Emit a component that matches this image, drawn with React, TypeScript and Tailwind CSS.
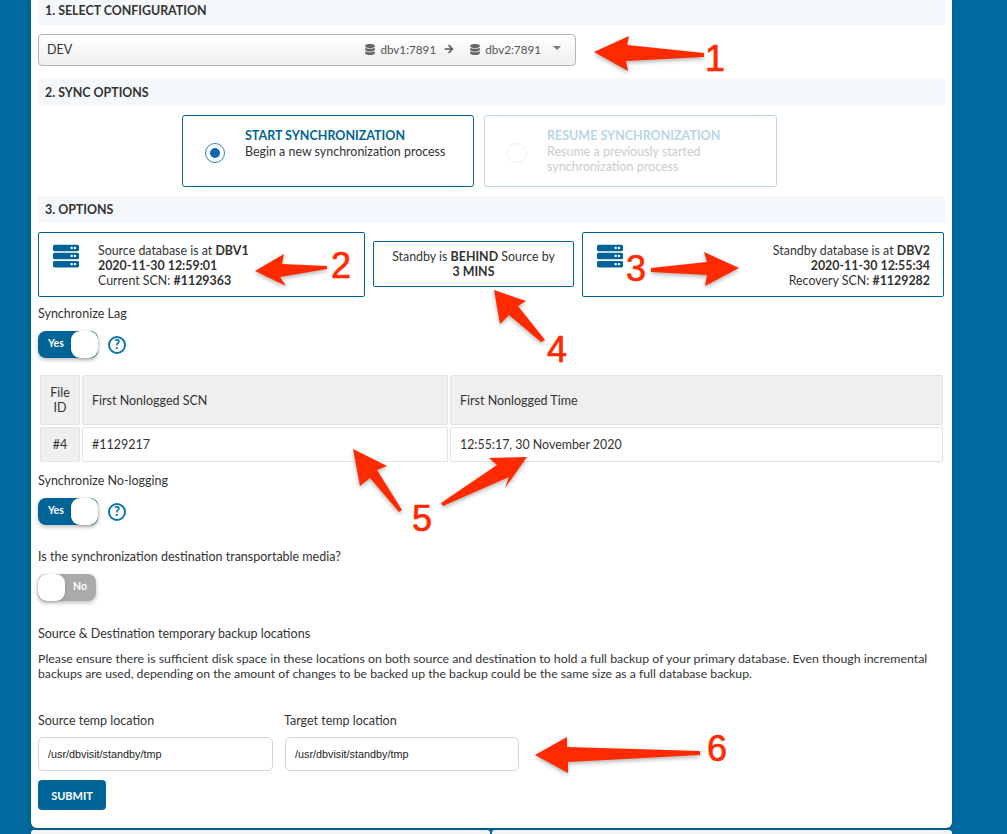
import { FaServer, FaDatabase, FaArrowRight } from "react-icons/fa";

function SectionHeader({ title, className }: { title: string; className: string }) {
  return (
    <div className={`bg-[#f5f8fa] px-[7px] text-[12.4px] font-bold text-[#333] ${className}`}>
      {title}
    </div>
  );
}

function Toggle({ on }: { on: boolean }) {
  if (on) {
    return (
      <div className="relative h-[27px] w-[60px] rounded-[8px] bg-[#006596] shadow-[0_2px_4px_rgba(0,0,0,0.25)]">
        <span className="absolute left-[10px] top-[5px] text-[10.5px] font-bold text-white">Yes</span>
        <span className="absolute right-0 top-0 h-[27px] w-[27px] rounded-[9px] bg-white shadow-[0_1px_3px_rgba(0,0,0,0.2)]" />
      </div>
    );
  }
  return (
    <div className="relative h-[27px] w-[58px] rounded-[8px] bg-[#aaaaaa] shadow-[0_2px_4px_rgba(0,0,0,0.25)]">
      <span className="absolute right-[9px] top-[5px] text-[10.5px] font-bold text-white">No</span>
      <span className="absolute left-0 top-0 h-[27px] w-[27px] rounded-[9px] bg-white shadow-[0_1px_3px_rgba(0,0,0,0.2)]" />
    </div>
  );
}

function Help() {
  return (
    <span className="ml-[10px] flex h-[18px] w-[18px] items-center justify-center rounded-full border-2 border-[#0a73a8] text-[13px] font-black leading-none text-[#0a73a8]">
      ?
    </span>
  );
}

function TempField({ label, width, labelClass }: { label: string; width: string; labelClass?: string }) {
  return (
    <div className={width}>
      <div className={`h-[17px] leading-[17px] ${labelClass ?? ""}`}>{label}</div>
      <div className="mt-[8px] flex h-[34px] items-center rounded-[5px] border border-[#d5d5d5] pl-[9px] font-['Liberation_Sans',sans-serif] text-[10.8px] text-[#222]">
        /usr/dbvisit/standby/tmp
      </div>
    </div>
  );
}

const RED = "#ff2a00";

const ARROWS = [
  "594,52 629,36 627,45 704,53 704,57 626,61 628,71",
  "255,271 284,254 282,264 327,266 327,269 280,277 286,286",
  "651,268 707,262 704,252 739,268 705,286 707,275 651,272",
  "494,290 526,301 518,306 545,340 541,342 509,315 500,324",
  "353,449 387,466 377,470 402,510 399,512 370,478 360,486",
  "527,457 489,458 497,465 441,503 443,506 509,477 505,488",
  "535,755 567,737 567,747 700,751 700,755 568,762 568,773",
];

const NUMBERS = [
  { n: "1", cls: "left-[705px] top-[39px]" },
  { n: "2", cls: "left-[331px] top-[246px]" },
  { n: "3", cls: "left-[626px] top-[249px]" },
  { n: "4", cls: "left-[547px] top-[330px]" },
  { n: "5", cls: "left-[412px] top-[499px]" },
  { n: "6", cls: "left-[707px] top-[729px]" },
];

function Annotations() {
  return (
    <>
      <svg
        className="absolute left-0 top-0 h-[834px] w-[1007px] drop-shadow-[0_2px_2px_rgba(0,0,0,0.3)]"
        viewBox="0 0 1007 834"
      >
        {ARROWS.map((p) => (
          <polygon key={p} points={p} fill={RED} />
        ))}
      </svg>
      {NUMBERS.map((x) => (
        <span
          key={x.n}
          className={`absolute font-['Liberation_Sans',sans-serif] text-[36px] leading-[40px] text-[#ff2a00] [-webkit-text-stroke:0.7px_#ff2a00] ${x.cls}`}
        >
          {x.n}
        </span>
      ))}
    </>
  );
}

export default function App() {
  return (
    <div className="relative h-[834px] w-[1007px] overflow-hidden bg-[#006a9f] font-['Lato',sans-serif] text-[12.5px] leading-[15px] text-[#333]">
      <div className="ml-[31px] h-[828px] w-[921px] rounded-b-[6px] bg-white px-[7px] shadow-[0_0_6px_rgba(0,0,0,0.2)]">
        <SectionHeader title="1. SELECT CONFIGURATION" className="h-[25px] pt-[3px]" />

        <div className="mt-[9px] flex h-[32px] w-[538px] items-center rounded-[4px] border border-[#b5b5b5] bg-gradient-to-b from-white to-[#efefef] pb-[2px] pl-[8px] pr-[14px] text-[12.5px]">
          <span>DEV</span>
          <span className="ml-auto flex items-center text-[11.7px] text-[#555]">
            <FaDatabase className="mr-[5px] h-[11px] w-[10px] text-[#666]" />
            dbv1:7891
            <FaArrowRight className="ml-[8px] mr-[9px] h-[10px] w-[10px] text-[#555]" />
            <span className="w-[7px]" />
            <FaDatabase className="mr-[5px] h-[11px] w-[10px] text-[#666]" />
            dbv2:7891
            <span className="mb-[2px] ml-[12px] h-0 w-0 border-x-[4px] border-t-[4px] border-x-transparent border-t-[#777]" />
          </span>
        </div>

        <SectionHeader title="2. SYNC OPTIONS" className="mt-[12px] h-[28px] pt-[7px]" />

        <div className="mt-[9px] flex h-[72px] gap-[10px] pl-[144px]">
          <div className="flex w-[292px] rounded-[3px] border border-[#006596] pl-[22px] pt-[12px]">
            <span className="mt-[15px] flex h-[20px] w-[20px] items-center justify-center rounded-full border border-[#2a86c8]">
              <span className="h-[10px] w-[10px] rounded-full bg-[#0f67b1]" />
            </span>
            <div className="ml-[20px]">
              <div className="h-[16px] font-bold text-[#006596]">START SYNCHRONIZATION</div>
              <div className="text-[12.45px]">Begin a new synchronization process</div>
            </div>
          </div>
          <div className="flex w-[293px] rounded-[3px] border border-[#bcd8e5] pl-[22px] pt-[12px]">
            <span className="mt-[15px] h-[20px] w-[20px] rounded-full border border-[#eeeeee]" />
            <div className="ml-[20px]">
              <div className="h-[16px] font-bold text-[#b8d6e6]">RESUME SYNCHRONIZATION</div>
              <div className="text-[#cccccc]">
                Resume a previously started
                <br />
                synchronization process
              </div>
            </div>
          </div>
        </div>

        <SectionHeader title="3. OPTIONS" className="mt-[9px] h-[27px] pt-[6px]" />

        <div className="mt-[9px] flex h-[65px] items-start text-[12.4px]">
          <div className="flex h-[65px] w-[327px] rounded-[2px] border border-[#006596] pl-[14px] pt-[10px]">
            <FaServer className="h-[26px] w-[26px] text-[#006596]" />
            <div className="ml-[19px]">
              <div>
                Source database is at <b>DBV1</b>
              </div>
              <div className="font-bold">2020-11-30 12:59:01</div>
              <div>
                Current SCN: <b>#1129363</b>
              </div>
            </div>
          </div>
          <div className="ml-[8px] mt-[9px] flex h-[46px] w-[201px] flex-col items-center justify-center rounded-[2px] border border-[#006596]">
            <div>
              Standby is <b>BEHIND</b> Source by
            </div>
            <b>3 MINS</b>
          </div>
          <div className="ml-[8px] flex h-[65px] w-[362px] justify-between rounded-[2px] border border-[#006596] pl-[14px] pr-[13px] pt-[10px]">
            <FaServer className="h-[26px] w-[26px] text-[#006596]" />
            <div className="text-right">
              <div>
                Standby database is at <b>DBV2</b>
              </div>
              <div className="font-bold">2020-11-30 12:55:34</div>
              <div>
                Recovery SCN: <b>#1129282</b>
              </div>
            </div>
          </div>
        </div>

        <div className="mt-[9px] h-[15px]">Synchronize Lag</div>
        <div className="mt-[10px] flex items-center">
          <Toggle on />
          <Help />
        </div>

        <div className="ml-[2px] mt-[17px] grid w-[903px] grid-cols-[40px_366px_493px] grid-rows-[50px_35px] gap-[2px]">
          <div className="flex items-center justify-center rounded-[2px] border border-[#e2e2e2] bg-[#efefef] text-center">
            File
            <br />
            ID
          </div>
          <div className="flex items-center rounded-[2px] border border-[#e2e2e2] bg-[#efefef] pl-[9px]">First Nonlogged SCN</div>
          <div className="flex items-center rounded-[2px] border border-[#e2e2e2] bg-[#efefef] pl-[9px]">First Nonlogged Time</div>
          <div className="flex items-center justify-center rounded-[2px] border border-[#e2e2e2] bg-[#efefef]">#4</div>
          <div className="flex items-center rounded-[2px] border border-[#e2e2e2] pl-[9px]">#1129217</div>
          <div className="flex items-center rounded-[2px] border border-[#e2e2e2] pl-[9px] text-[12.4px]">12:55:17, 30 November 2020</div>
        </div>

        <div className="mt-[11px] h-[15px]">Synchronize No-logging</div>
        <div className="mt-[10px] flex items-center">
          <Toggle on />
          <Help />
        </div>

        <div className="mt-[24px] h-[15px]">Is the synchronization destination transportable media?</div>
        <div className="mt-[10px]">
          <Toggle on={false} />
        </div>

        <div className="mt-[25px] h-[15px]">Source &amp; Destination temporary backup locations</div>
        <p className="mt-[10px] w-[905px] text-[12.35px]">
          Please ensure there is sufficient disk space in these locations on both source and destination to hold a full backup of your primary database. Even though incremental
          <br />
          <span className="text-[12.28px]">backups are used, depending on the amount of changes to be backed up the backup could be the same size as a full database backup.</span>
        </p>

        <div className="mt-[31px] flex gap-[12px]">
          <TempField label="Source temp location" width="w-[235px]" />
          <TempField label="Target temp location" width="w-[234px]" labelClass="-ml-px" />
        </div>

        <button className="mt-[9px] flex h-[30px] w-[68px] items-center justify-center rounded-[4px] bg-[#006596] text-[11px] font-bold text-white">
          SUBMIT
        </button>
      </div>

      <div className="ml-[31px] flex h-[6px] w-[921px] gap-[2px] border-t-2 border-[#005a87]">
        <div className="w-[459px] rounded-t-[3px] bg-[#f3f3f3]" />
        <div className="flex-1 rounded-t-[3px] bg-[#f3f3f3]" />
      </div>

      <Annotations />
    </div>
  );
}
